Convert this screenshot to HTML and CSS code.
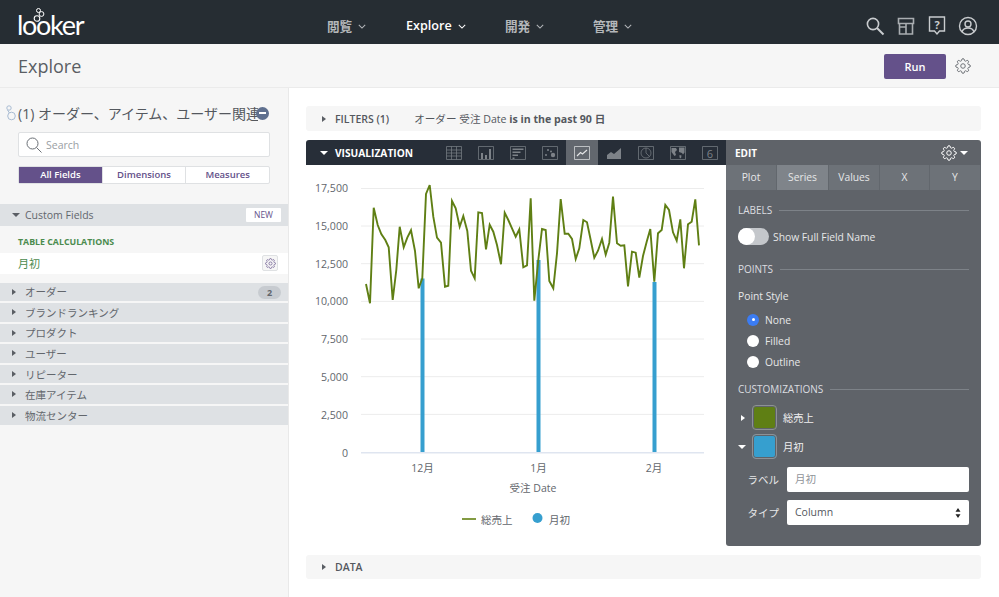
FILE: index.html
```html
<!DOCTYPE html>
<html lang="ja">
<head>
  <meta charset="UTF-8">
  <title>Explore</title>
  <link rel="stylesheet" href="styles.css">
</head>
<body>
  <svg class="defs" width="0" height="0">
    <symbol id="gear" viewBox="0 0 24 24">
      <circle cx="12" cy="12" r="3.4" fill="none" stroke="currentColor" stroke-width="1.5"/>
      <path fill="none" stroke="currentColor" stroke-width="1.5" d="M19.4 15a1.65 1.65 0 0 0 .33 1.82l.06.06a2 2 0 0 1 0 2.83 2 2 0 0 1-2.83 0l-.06-.06a1.65 1.65 0 0 0-1.82-.33 1.65 1.65 0 0 0-1 1.51V21a2 2 0 0 1-2 2 2 2 0 0 1-2-2v-.09A1.65 1.65 0 0 0 9 19.4a1.65 1.65 0 0 0-1.82.33l-.06.06a2 2 0 0 1-2.83 0 2 2 0 0 1 0-2.83l.06-.06a1.65 1.65 0 0 0 .33-1.82 1.65 1.65 0 0 0-1.51-1H3a2 2 0 0 1-2-2 2 2 0 0 1 2-2h.09A1.65 1.65 0 0 0 4.6 9a1.65 1.65 0 0 0-.33-1.82l-.06-.06a2 2 0 0 1 0-2.83 2 2 0 0 1 2.83 0l.06.06a1.65 1.65 0 0 0 1.82.33H9a1.65 1.65 0 0 0 1-1.51V3a2 2 0 0 1 2-2 2 2 0 0 1 2 2v.09a1.65 1.65 0 0 0 1 1.51 1.65 1.65 0 0 0 1.82-.33l.06-.06a2 2 0 0 1 2.83 0 2 2 0 0 1 0 2.83l-.06.06a1.65 1.65 0 0 0-.33 1.82V9a1.65 1.65 0 0 0 1.51 1H21a2 2 0 0 1 2 2 2 2 0 0 1-2 2h-.09a1.65 1.65 0 0 0-1.51 1z"/>
    </symbol>
    <symbol id="chev" viewBox="0 0 10 6">
      <path d="M1 1l4 4 4-4" fill="none" stroke="currentColor" stroke-width="1.3"/>
    </symbol>
  </svg>

  <header class="topbar">
    <div class="logo">
      <span class="logo-text">looker</span>
      <svg class="logo-rings" width="16" height="22" viewBox="0 0 16 22">
        <circle cx="5.5" cy="3.5" r="2" fill="none" stroke="#fff" stroke-width="1"/>
        <circle cx="8.5" cy="7" r="2.4" fill="none" stroke="#fff" stroke-width="1"/>
        <circle cx="4" cy="11.500" r="2.800" fill="none" stroke="#fff" stroke-width="1.100"/>
      </svg>
    </div>
    <nav class="nav">
      <a class="nav-item nav-browse">閲覧 <svg class="chev"><use href="#chev"/></svg></a>
      <a class="nav-item nav-explore">Explore <svg class="chev"><use href="#chev"/></svg></a>
      <a class="nav-item nav-develop">開発 <svg class="chev"><use href="#chev"/></svg></a>
      <a class="nav-item nav-admin">管理 <svg class="chev"><use href="#chev"/></svg></a>
    </nav>
    <div class="top-icons">
      <svg width="20" height="20" viewBox="0 0 20 20" fill="none" stroke="#c9cccf" stroke-width="1.6"><circle cx="8" cy="8" r="5.6"/><path d="M12 12l6.5 6.5" stroke-width="2"/></svg>
      <svg width="18" height="18" viewBox="0 0 18 18" fill="none" stroke="#a9adb1" stroke-width="1.6"><path d="M1.5 1.5h15v5h-15zM2.500 6.500v10.500h13V6.500M9 6.500V17M2.500 10h6.500"/></svg>
      <svg width="18" height="20" viewBox="0 0 18 20" fill="none" stroke="#c9cccf" stroke-width="1.4"><path d="M1.500 1h15v14h-5l-2.500 3-2.500-3h-5z"/><text x="9" y="12.500" text-anchor="middle" class="help-mark">?</text></svg>
      <svg width="20" height="20" viewBox="0 0 20 20" fill="none" stroke="#c9cccf" stroke-width="1.4"><circle cx="10" cy="10" r="8.500"/><circle cx="10" cy="8" r="3"/><path d="M4 16c1-3.500 3.500-4 6-4s5 .5 6 4"/></svg>
    </div>
  </header>

  <div class="subbar">
    <h1>Explore</h1>
    <button class="run">Run</button>
    <svg class="run-gear"><use href="#gear"/></svg>
  </div>

  <div class="body">
    <aside class="sidebar">
      <div class="model">
        <svg class="model-icon" width="11" height="16" viewBox="0 0 11 16" fill="none" stroke="#a9bcd3" stroke-width="1"><circle cx="4" cy="3" r="2.200"/><circle cx="6.500" cy="11" r="3.800"/><path d="M2.500 5l2 3"/></svg>
        <span class="model-name">(1) オーダー、アイテム、ユーザー関連</span>
        <span class="model-minus"></span>
      </div>
      <div class="search">
        <svg width="16" height="16" viewBox="0 0 16 16" fill="none" stroke="#6a6f75" stroke-width="1"><circle cx="6.500" cy="6.500" r="5.500"/><path d="M10.500 10.500l5 5"/></svg>
        <span>Search</span>
      </div>
      <div class="field-tabs">
        <span class="field-tab active">All Fields</span>
        <span class="field-tab">Dimensions</span>
        <span class="field-tab">Measures</span>
      </div>

      <div class="group group-custom">
        <i class="caret-down"></i>Custom Fields
        <span class="new">NEW</span>
      </div>
      <div class="calc-title">TABLE CALCULATIONS</div>
      <div class="calc-row">
        <span>月初</span>
        <span class="calc-btn"><svg width="11" height="11"><use href="#gear"/></svg></span>
      </div>

      <div class="groups">
        <div class="group"><i class="caret-right"></i>オーダー<span class="badge">2</span></div>
        <div class="group"><i class="caret-right"></i>ブランドランキング</div>
        <div class="group"><i class="caret-right"></i>プロダクト</div>
        <div class="group"><i class="caret-right"></i>ユーザー</div>
        <div class="group"><i class="caret-right"></i>リピーター</div>
        <div class="group"><i class="caret-right"></i>在庫アイテム</div>
        <div class="group"><i class="caret-right"></i>物流センター</div>
      </div>
    </aside>

    <main class="main">
      <div class="strip">
        <i class="caret-right"></i><b class="strip-title">FILTERS (1)</b>
        <span class="filter-text">オーダー 受注 Date <b>is in the past 90 日</b></span>
      </div>

      <div class="viz">
        <div class="viz-left">
          <div class="viz-bar">
            <i class="caret-down white"></i><b>VISUALIZATION</b>
            <div class="viz-icons">
              <span class="viz-icon"><svg viewBox="0 0 16 16"><path d="M.5 1.500h15v13H.5zM.5 5h15M.5 8h15M.5 11h15M5.500 1.500v13M10.500 1.500v13"/></svg></span>
              <span class="viz-icon"><svg viewBox="0 0 16 16"><path d="M.5 1.500h15v13H.5z"/><path class="fill" d="M3 8h2v6H3zM7 10h2v4H7zM11 4h2v10h-2z"/></svg></span>
              <span class="viz-icon"><svg viewBox="0 0 16 16"><path d="M.5 1.500h15v13H.5z"/><path class="fill" d="M2.500 3.500h11v1.500h-11zM2.500 6.500h8V8h-8zM2.500 9.500h5.500V11H2.500zM2.500 12.500h2V14h-2z"/></svg></span>
              <span class="viz-icon"><svg viewBox="0 0 16 16"><path d="M.5 1.500h15v13H.5z"/><circle class="fill" cx="4" cy="10" r="1"/><circle class="fill" cx="6" cy="5" r="1"/><circle class="fill" cx="11" cy="10" r="2.200"/><circle class="fill" cx="9" cy="6.500" r="1"/></svg></span>
              <span class="viz-icon on"><svg viewBox="0 0 16 16"><path d="M.5 1.500h15v13H.5z"/><path d="M3 11l3.500-3.500 2 1.500L13 5" stroke-width="1.200"/></svg></span>
              <span class="viz-icon"><svg viewBox="0 0 16 16"><path class="fill" d="M1 14V10l4-3 3 2 7-6v11z"/></svg></span>
              <span class="viz-icon"><svg viewBox="0 0 16 16"><path d="M.5 1.500h15v13H.5z"/><circle cx="8" cy="8" r="5"/><path d="M8 3v5l3.500 3.500"/></svg></span>
              <span class="viz-icon"><svg viewBox="0 0 16 16"><path d="M.5 1.500h15v13H.5z"/><path class="fill" d="M1.500 3h4.500l1 2-2 2 1 3-1.500 1-3-4zM9 2.500h5.500v5l-1.500 2-1-1.500-3-1zM9.500 10l2 .5-.5 3-1.500-1z"/></svg></span>
              <span class="viz-icon"><svg viewBox="0 0 16 16"><path d="M.5 1.500h15v13H.5z"/><text x="8" y="12.500" text-anchor="middle" class="six">6</text></svg></span>
            </div>
          </div>

          <svg class="chart" viewBox="306 165 420 381" width="420" height="381">
            <g class="grid">
              <path d="M361 188.500H704M361 226H704M361 263.700H704M361 301.400H704M361 339H704M361 376.700H704M361 414.400H704"/>
            </g>
            <path class="baseline" d="M361 452.700H704"/>
            <path class="bar" d="M420.500 278.500h4V452h-4zM536.500 260h4V452h-4zM652.500 282h4V452h-4z"/>
            <polyline class="series" points="366,284 370,303.300 373.700,207.700 377.700,225 381.300,234 385.300,240 388.700,247.300 392.700,300 396.300,270 399.700,226.700 403.700,247.300 407.300,237.700 411,230.300 415,251 418.700,288.300 422.300,278.300 426,194 429.700,185 433.300,216.700 437,237.700 441,242.700 445,286.700 448.300,285.700 452,201 455.700,208.300 459.700,226.700 463.300,216 467.300,231 471,270.700 474.700,278.300 478.300,212.300 482,213 486,249.300 489.700,224.700 493.300,231.700 497,245 501,264.300 504.700,212.700 508.300,220 512,228.300 515.700,236.700 519.300,229.300 523.300,267.300 527,265.300 530.700,198.300 534.300,300.700 538.300,260 542,229 545.700,230 549.300,281 553.300,288.300 557,253.300 560.700,199 564.700,233.700 568.300,233.700 572,239 575.700,259 579.300,248.300 583.300,220 587,222.300 590.700,240 594.300,257.700 598,250.700 602,239 605.700,254.700 609.300,242.700 613,196.700 617,243.300 620.700,245.700 624.300,245.300 628,286.300 632,251.700 635.700,252.700 639.300,277.700 643,256 646.700,241.700 650.300,229 654.300,281.700 658,233.300 661.700,230 665.300,205 669,210 673,232.300 676.700,240.700 680.300,219.300 684,268.300 688,224.300 691.700,221.700 695.300,199.300 699,245.300"/>
            <g class="y-labels">
              <text x="348" y="192">17,500</text>
              <text x="348" y="229.500">15,000</text>
              <text x="348" y="267.500">12,500</text>
              <text x="348" y="305">10,000</text>
              <text x="348" y="343">7,500</text>
              <text x="348" y="380.500">5,000</text>
              <text x="348" y="418.500">2,500</text>
              <text x="348" y="456.500">0</text>
            </g>
            <g class="x-labels">
              <text x="422.500" y="471.500">12月</text>
              <text x="538.500" y="471.500">1月</text>
              <text x="654" y="471.500">2月</text>
              <text x="533" y="492">受注 Date</text>
            </g>
            <path class="legend-line" d="M462 519h14"/>
            <text class="legend" x="481" y="524">総売上</text>
            <circle class="legend-dot" cx="537.500" cy="518" r="5"/>
            <text class="legend" x="549" y="524">月初</text>
          </svg>
        </div>

        <section class="edit">
          <div class="edit-head">
            <b>EDIT</b>
            <span class="edit-gear"><svg width="16" height="16"><use href="#gear"/></svg><i class="caret-down white"></i></span>
          </div>
          <div class="edit-tabs">
            <span>Plot</span><span class="on">Series</span><span>Values</span><span>X</span><span>Y</span>
          </div>
          <div class="edit-body">
            <div class="legend-title labels-title">LABELS</div>
            <div class="toggle-row"><span class="toggle"></span>Show Full Field Name</div>
            <div class="legend-title points-title">POINTS</div>
            <div class="point-style">Point Style</div>
            <div class="radio-row"><span class="radio sel"></span>None</div>
            <div class="radio-row"><span class="radio"></span>Filled</div>
            <div class="radio-row"><span class="radio"></span>Outline</div>
            <div class="legend-title custom-title">CUSTOMIZATIONS</div>
            <div class="swatch-row"><i class="caret-right white"></i><span class="swatch green"></span>総売上</div>
            <div class="swatch-row second"><i class="caret-down white"></i><span class="swatch blue"></span>月初</div>
            <div class="form-row first"><label>ラベル</label><span class="input placeholder">月初</span></div>
            <div class="form-row"><label>タイプ</label><span class="input select">Column<svg width="6" height="10" viewBox="0 0 6 10"><path d="M3 0l2.500 3.800h-5zM3 10L.5 6.200h5z" fill="#222"/></svg></span></div>
          </div>
        </section>
      </div>

      <div class="strip strip-data">
        <i class="caret-right"></i><b class="strip-title">DATA</b>
      </div>
    </main>
  </div>
</body>
</html>
```

FILE: styles.css
```css
* {
  box-sizing: border-box;
}

body {
  margin: 0;
  height: 597px;
  overflow: hidden;
  background: #fff;
  color: #54585e;
  font-family: 'Open Sans', 'Noto Sans CJK JP', sans-serif;
  font-size: 12px;
}

.defs {
  position: absolute;
}

/* top bar */
.topbar {
  height: 44px;
  background: #262d33;
  display: flex;
  align-items: center;
  position: relative;
}

.logo {
  width: 327px;
  padding-left: 17px;
  position: relative;
  height: 44px;
}

.logo-text {
  font-family: 'Lato', sans-serif;
  font-weight: 400;
  font-size: 27px;
  line-height: 44px;
  color: #fff;
  letter-spacing: -1.300px;
  display: block;
  margin-top: 3px;
}

.logo-rings {
  position: absolute;
  left: 33px;
  top: 7px;
}

.nav {
  display: flex;
  color: #b4b7ba;
  font-size: 12.600px;
  font-weight: 600;
  padding-top: 6px;
}

.nav-item {
  display: flex;
  align-items: center;
  gap: 6px;
  white-space: nowrap;
}

.nav-browse { width: 79px; }
.nav-explore { width: 99px; color: #fff; }
.nav-develop { width: 88px; }

.chev {
  width: 8px;
  height: 5px;
  margin-top: 2px;
}

.top-icons {
  position: absolute;
  left: 865px;
  top: 16px;
  width: 113px;
  display: flex;
  justify-content: space-between;
  align-items: center;
}

.help-mark {
  font-size: 11px;
  font-weight: 700;
  fill: #c9cccf;
  stroke: none;
}

/* explore title bar */
.subbar {
  height: 44px;
  background: #f6f6f6;
  display: flex;
  align-items: center;
  padding-left: 18px;
  border-bottom: 1px solid #ebebeb;
}

h1 {
  margin: 0;
  font-size: 18px;
  font-weight: 400;
  color: #5a5e64;
  flex: 1;
}

.run {
  width: 62px;
  height: 25px;
  border: 0;
  border-radius: 2px;
  background: #64518a;
  color: #fff;
  font-family: inherit;
  font-size: 11px;
  font-weight: 600;
  margin-top: 1px;
}

.run-gear {
  width: 16px;
  height: 16px;
  margin: 1px 28px 0 9px;
  color: #6f7378;
}

.body {
  display: flex;
  height: 509px;
}

/* left column */
.sidebar {
  width: 289px;
  flex: none;
  background: #f6f6f6;
  border-right: 1px solid #e9e9e9;
}

.model {
  height: 44px;
  display: flex;
  align-items: center;
  padding: 5px 0 0 5px;
  position: relative;
  overflow: hidden;
}

.model-icon {
  flex: none;
  margin-right: 2px;
}

.model-name {
  font-size: 14px;
  color: #54585e;
  white-space: nowrap;
  width: 240px;
  overflow: hidden;
}

.model-minus {
  position: absolute;
  left: 256px;
  top: 18.500px;
  width: 13px;
  height: 13px;
  border-radius: 50%;
  background: #5f708f;
}

.model-minus::after {
  content: "";
  position: absolute;
  left: 3px;
  top: 5.500px;
  width: 7px;
  height: 2px;
  background: #fff;
}

.search {
  margin: 0 18px 0 18px;
  width: 252px;
  height: 25px;
  background: #fff;
  border: 1px solid #dfe1e3;
  border-radius: 2px;
  display: flex;
  align-items: center;
  gap: 4px;
  padding-left: 7px;
  color: #9a9ea3;
  font-size: 10.500px;
}

.field-tabs {
  margin: 9px 0 0 18px;
  width: 252px;
  height: 18px;
  display: flex;
  border-radius: 2px;
  background: #fff;
  border: 1px solid #dfe1e3;
  color: #64518a;
  font-size: 9.500px;
}

.field-tab {
  flex: 1;
  line-height: 16px;
  text-align: center;
  font-weight: 600;
  border-left: 1px solid #dfe1e3;
}

.field-tab.active {
  background: #64518a;
  color: #fff;
  border: 0;
}

.group {
  height: 19px;
  background: #dee1e4;
  display: flex;
  align-items: center;
  padding-left: 25px;
  color: #62666c;
  font-size: 10.500px;
  position: relative;
}

.group i {
  position: absolute;
  left: 12px;
  top: 6px;
}

.group-custom {
  height: 22px;
  margin-top: 19.500px;
}

.group-custom i {
  left: 12px;
  top: 9px;
}

.new {
  position: absolute;
  left: 246px;
  top: 4px;
  width: 35px;
  height: 14px;
  background: #fff;
  color: #64518a;
  font-size: 8.500px;
  font-weight: 400;
  line-height: 14px;
  text-align: center;
  border-radius: 1px;
}

.calc-title {
  margin: 9px 0 0 18px;
  height: 18px;
  line-height: 14px;
  color: #4b8b4e;
  font-size: 8.800px;
  font-weight: 700;
}

.calc-row {
  height: 21px;
  background: #fff;
  display: flex;
  align-items: center;
  justify-content: space-between;
  padding: 0 10px 0 18px;
  color: #4b8b4e;
  font-size: 11px;
}

.calc-btn {
  width: 16px;
  height: 16px;
  border: 1px solid #dfe1e3;
  border-radius: 2px;
  background: #f6f6f6;
  color: #64518a;
  display: flex;
  align-items: center;
  justify-content: center;
}

.groups {
  margin-top: 9px;
  display: grid;
  grid-auto-rows: 18.500px;
  row-gap: 2.100px;
}

.groups .group {
  height: auto;
}

.badge {
  position: absolute;
  left: 258px;
  top: 3px;
  width: 23px;
  height: 13px;
  border-radius: 7px;
  background: #c7cbd0;
  font-size: 9px;
  font-weight: 700;
  line-height: 13px;
  text-align: center;
}

/* carets */
.caret-right {
  display: inline-block;
  width: 0;
  height: 0;
  border-left: 4px solid #5a5e64;
  border-top: 3.500px solid transparent;
  border-bottom: 3.500px solid transparent;
}

.caret-right.white {
  border-left-color: #fff;
}

.caret-down {
  display: inline-block;
  width: 0;
  height: 0;
  border-top: 4px solid #5a5e64;
  border-left: 4px solid transparent;
  border-right: 4px solid transparent;
}

.caret-down.white {
  border-top-color: #fff;
}

/* main column */
.main {
  flex: 1;
  padding: 18px 18px 0 17px;
}

.strip {
  height: 25px;
  background: #f6f6f6;
  border-radius: 3px;
  display: flex;
  align-items: center;
  padding-left: 16px;
  font-size: 10.500px;
}

.strip-title {
  margin-left: 9px;
  font-weight: 600;
}

.filter-text {
  margin-left: 25px;
  font-size: 10.600px;
}

.filter-text b {
  font-weight: 700;
}

.viz {
  display: flex;
  margin-top: 9px;
  height: 406px;
}

.viz-left {
  width: 420px;
  flex: none;
}

.viz-bar {
  height: 25px;
  background: #272e38;
  border-radius: 3px 0 0 0;
  color: #fff;
  display: flex;
  align-items: center;
  padding-left: 14px;
  font-size: 10.200px;
}

.viz-bar b {
  margin-left: 7px;
  font-weight: 700;
  width: 111px;
}

.viz-icons {
  display: flex;
  margin-left: 4px;
}

.viz-icon {
  width: 32px;
  height: 25px;
  display: flex;
  align-items: center;
  justify-content: center;
}

.viz-icon svg {
  width: 16px;
  height: 16px;
  fill: none;
  stroke: #7d8288;
  stroke-width: .7;
}

.viz-icon .fill {
  fill: #7d8288;
  stroke: none;
}

.viz-icon .six {
  font-size: 11px;
  fill: #7d8288;
  stroke: none;
}

.viz-icon.on {
  background: #62676e;
}

.viz-icon.on svg {
  stroke: #e4e5e6;
}

.chart {
  display: block;
}

.chart text {
  font-family: 'Open Sans', 'Noto Sans CJK JP', sans-serif;
  fill: #62666c;
}

.grid {
  stroke: #ececec;
  stroke-width: 1;
  fill: none;
}

.baseline {
  stroke: #dfe5f0;
  stroke-width: 1.400;
}

.bar {
  fill: #369fcf;
}

.series {
  fill: none;
  stroke: #5f7f14;
  stroke-width: 1.900;
  stroke-linejoin: miter;
}

.y-labels text {
  font-size: 10.600px;
  text-anchor: end;
}

.x-labels text {
  font-size: 10.500px;
  text-anchor: middle;
}

.legend {
  font-size: 10.500px;
}

.legend-line {
  stroke: #6d8a20;
  stroke-width: 1.700;
}

.legend-dot {
  fill: #369fcf;
}

/* edit panel */
.edit {
  width: 255px;
  flex: none;
  background: #5f6369;
  border-radius: 0 3px 3px 3px;
  color: #e6e7e8;
  font-size: 10.300px;
}

.edit-head {
  height: 25px;
  display: flex;
  align-items: center;
  justify-content: space-between;
  padding: 0 13px 0 9px;
  color: #fff;
  font-size: 10px;
  border-radius: 3px 3px 0 0;
}

.edit-head b {
  font-weight: 700;
}

.edit-gear {
  display: flex;
  align-items: center;
  gap: 3px;
}

.edit-tabs {
  height: 25px;
  display: grid;
  grid-template-columns: 51px 52px 51px 50px 51px;
  background: #6d7278;
  line-height: 25px;
  text-align: center;
}

.edit-tabs span {
  border-right: 1px solid #62676d;
}

.edit-tabs .on {
  background: #7f848a;
}

.edit-body {
  padding: 0 12px 0 12px;
}

.legend-title {
  display: flex;
  align-items: center;
  gap: 7px;
  height: 16px;
  font-size: 10px;
  color: #dcdde0;
}

.legend-title::after {
  content: "";
  flex: 1;
  height: 1px;
  background: #7d8288;
}

.labels-title { margin-top: 12px; }
.points-title { margin-top: 16px; }
.custom-title { margin-top: 9px; }

.toggle-row {
  display: flex;
  align-items: center;
  gap: 4px;
  height: 17px;
  margin-top: 10px;
}

.toggle {
  width: 31px;
  height: 17px;
  border-radius: 9px;
  background: #c4c7cb;
  position: relative;
}

.toggle::before {
  content: "";
  position: absolute;
  left: 0;
  top: 0;
  width: 17px;
  height: 17px;
  border-radius: 50%;
  background: #fff;
}

.point-style {
  margin-top: 12px;
  height: 16px;
}

.radio-row {
  display: flex;
  align-items: center;
  gap: 6px;
  height: 21px;
  padding-left: 9px;
}

.point-style + .radio-row {
  margin-top: 4px;
}

.radio {
  width: 12px;
  height: 12px;
  border-radius: 50%;
  background: #fff;
}

.radio.sel {
  background: #3b7cf3;
  position: relative;
}

.radio.sel::after {
  content: "";
  position: absolute;
  left: 4.500px;
  top: 4.500px;
  width: 3px;
  height: 3px;
  border-radius: 50%;
  background: #fff;
}

.swatch-row {
  display: flex;
  align-items: center;
  height: 25px;
  margin-top: 8px;
  color: #f0f0f1;
}

.swatch-row.second {
  margin-top: 4px;
}

.swatch-row i {
  margin-left: 3px;
  width: 0;
}

.swatch-row .caret-down {
  margin-left: 0;
}

.swatch {
  width: 25px;
  height: 25px;
  margin: 0 6px 0 7px;
  border: 1px solid #8d9196;
  border-radius: 4px;
  box-shadow: inset 0 0 0 1px #5f6369;
}

.swatch-row .caret-down + .swatch {
  margin-left: 6px;
}

.swatch.green { background: #5f7f14; }
.swatch.blue { background: #369fcf; }

.form-row {
  display: flex;
  align-items: center;
  justify-content: flex-end;
  height: 25px;
  margin-top: 8px;
}

.form-row label {
  margin-right: 8px;
  font-size: 10.500px;
  color: #e6e7e8;
}

.input {
  width: 182px;
  height: 25px;
  background: #fff;
  border-radius: 2px;
  padding: 0 8px;
  line-height: 25px;
  font-size: 10.500px;
  color: #54585e;
}

.placeholder {
  color: #8f9398;
}

.select {
  display: flex;
  align-items: center;
  justify-content: space-between;
}

.strip-data {
  margin-top: 9px;
  height: 24px;
}
```
